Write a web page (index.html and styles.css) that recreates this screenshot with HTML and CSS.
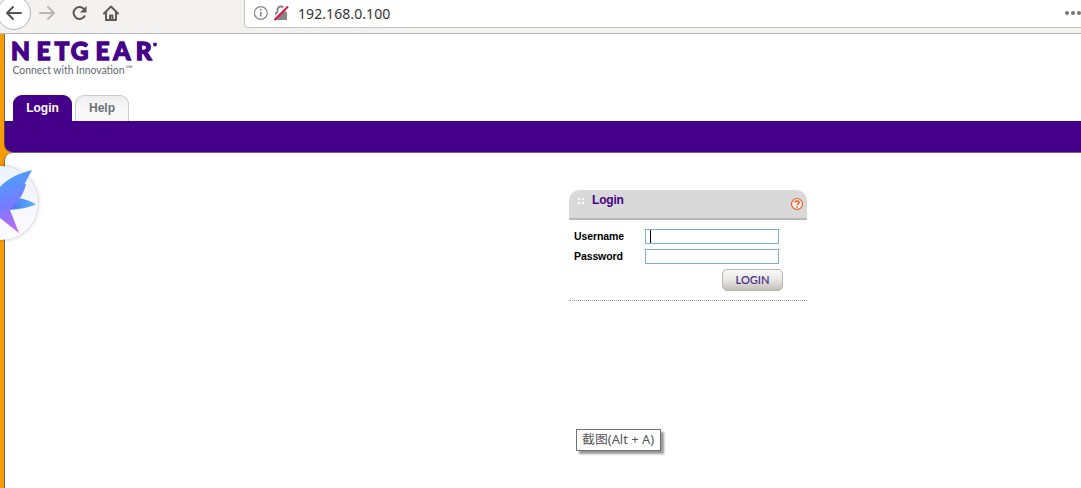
FILE: index.html
```html
<!DOCTYPE html>
<html lang="en">
<head>
<meta charset="utf-8">
<title>NETGEAR Login</title>
<link rel="stylesheet" href="styles.css">
</head>
<body>
<header class="toolbar">
  <svg class="nav-icons" width="130" height="33" viewBox="0 0 130 33">
    <circle cx="14" cy="13" r="16.5" fill="#fff" stroke="#b4b4b2"/>
    <g fill="none" stroke-width="2" stroke-linecap="round" stroke-linejoin="round">
      <path d="M21 13H7.500M13 7l-6 6 6 6" stroke="#555"/>
      <path d="M40 13h13.500M48 7l6 6-6 6" stroke="#b9b9b7"/>
      <path d="M84.500 9.500A6 6 0 1 0 85 15.500" stroke="#5b5b5a" stroke-linecap="butt"/>
      <path d="M104 13.500l7-7 7 7M106 13v7h10v-7" stroke="#5b5b5a"/>
      <path d="M110 20v-4.500h2.500V20" stroke="#5b5b5a"/>
    </g>
    <path d="M86.500 6v6.500H80z" fill="#5b5b5a"/>
  </svg>
  <div class="address">
    <svg width="44" height="26" viewBox="0 0 44 26">
      <circle cx="15.800" cy="13" r="6.400" fill="none" stroke="#858585" stroke-width="1.200"/>
      <path d="M15.800 12v4.500M15.800 9v1.600" stroke="#858585" stroke-width="1.600"/>
      <path d="M32.500 13v-3a3.500 3.500 0 0 1 7 0v3" fill="none" stroke="#858585" stroke-width="2"/>
      <rect x="30" y="12" width="12" height="8" rx="1" fill="#858585"/>
      <path d="M28.500 18.500L41.500 5.500" stroke="#fff" stroke-width="2"/>
      <path d="M29.500 20L43 6.500" stroke="#ec1146" stroke-width="2"/>
    </svg>
    <span class="url">192.168.0.100</span>
    <span class="more"><i></i><i></i><i></i></span>
  </div>
</header>
<main class="page">
  <div class="brand">
    <svg width="160" height="50" viewBox="0 0 160 50">
      <text class="wordmark" y="26" x="5 30.500 48.500 64.700 89.500 107.300 129.700">NETGEAR</text>
      <circle cx="149" cy="10.500" r="1.900" fill="#45008a"/>
      <text class="tagline" x="6.500" y="40" textLength="112" lengthAdjust="spacingAndGlyphs">Connect with Innovation</text>
      <text class="trademark" x="119.500" y="38" textLength="7" lengthAdjust="spacingAndGlyphs">™</text>
    </svg>
  </div>
  <nav class="tabs">
    <a class="tab active">Login</a>
    <a class="tab">Help</a>
  </nav>
  <div class="band"></div>
  <section class="content">
    <form class="panel">
      <div class="panel-head">
        <span class="grip"><i></i><i></i><i></i><i></i></span>
        <b>Login</b>
        <svg class="help" width="14" height="14" viewBox="0 0 14 14">
          <circle cx="7" cy="7" r="5.500" fill="#fff4ed" stroke="#f15a24" stroke-width="1.200"/>
          <path d="M5 5.500C5 3.600 9 3.600 9 5.500 9 6.700 7.100 6.800 7.100 8.200M7.100 9.200v1.500" fill="none" stroke="#f15a24" stroke-width="1.500"/>
        </svg>
      </div>
      <div class="fields">
        <div class="row"><span>Username</span><div class="input"><i class="caret"></i></div></div>
        <div class="row"><span>Password</span><div class="input"></div></div>
        <div class="button"><svg width="59" height="20"><text x="12.500" y="14" textLength="34" lengthAdjust="spacingAndGlyphs">LOGIN</text></svg></div>
      </div>
    </form>
  </section>
</main>
<svg class="bird" width="44" height="84" viewBox="0 0 44 84">
  <defs>
    <linearGradient id="wing" gradientUnits="userSpaceOnUse" x1="4" y1="18" x2="24" y2="68"><stop offset="0" stop-color="#4d9dff"/><stop offset=".5" stop-color="#7a7aff"/><stop offset="1" stop-color="#ca65f2"/></linearGradient>
    <linearGradient id="beak" x1="0" x2="1"><stop offset="0" stop-color="#4a70ee"/><stop offset="1" stop-color="#58b6ff"/></linearGradient>
    <linearGradient id="disc" x1="0" y1="0" x2="0" y2="1"><stop offset="0" stop-color="#edf2ff"/><stop offset="1" stop-color="#fcfcff"/></linearGradient>
  </defs>
  <circle class="disc" cx="1" cy="42" r="37" fill="url(#disc)"/>
  <path d="M17 37Q28 38 36 43.500 24 48 9 49z" fill="url(#beak)"/>
  <path d="M0 26C8 17 20 12 32 9L24.500 23l1.500 0C24 31 21 36 17 41L10 49 19 72 0 57z" fill="url(#wing)"/>
</svg>
<div class="tooltip"><svg width="82" height="19"><text x="5" y="14" textLength="72" lengthAdjust="spacingAndGlyphs">截图(Alt + A)</text></svg></div>
</body>
</html>
```
FILE: styles.css
```css
* { box-sizing: border-box; }
body {
  margin: 0;
  width: 1081px;
  height: 488px;
  overflow: hidden;
  background: #fff;
  font-family: "Liberation Sans", sans-serif;
}
.toolbar {
  display: flex;
  height: 34px;
  background: #f3f2f1;
  border-bottom: 1px solid #bdbcba;
}
.nav-icons { flex: none; margin-right: 114px; }
.address {
  display: flex;
  flex: 1;
  height: 28px;
  background: #fff;
  border: solid #c6c5c3;
  border-width: 0 0 1px 1px;
  border-bottom-left-radius: 4px;
}
.url {
  margin-left: 9px;
  font: 14px/27px "Noto Sans", sans-serif;
  letter-spacing: .08px;
  color: #333;
}
.more { display: flex; gap: 2px; margin: 11px 0 0 auto; }
.more i { width: 4px; height: 4px; border-radius: 50%; background: #777; }
.page {
  height: 454px;
  background: #f79c00;
  padding-left: 4px;
}
.brand {
  height: 51px;
  background: #fff;
  border-left: 1px solid #746a5c;
}
.brand svg { display: block; margin-left: 1px; }
.wordmark { font: 900 24.5px Lato, sans-serif; fill: #45008a; stroke: #45008a; stroke-width: 1.3px; }
.tagline { font: 11.5px Lato, sans-serif; fill: #5d6871; }
.trademark { font: 9px Lato, sans-serif; fill: #5d6871; }
.tabs {
  display: flex;
  gap: 3px;
  height: 36px;
  padding: 10px 0 0 8px;
  background: #fff;
  border-left: 1px solid #746a5c;
}
.tab {
  width: 54px;
  height: 26px;
  border: 1px solid #ccc;
  border-bottom: 0;
  border-radius: 9px 9px 0 0;
  background: linear-gradient(#ededed, #f8f8f8 50%);
  text-align: center;
  font: bold 12px/24px "Liberation Sans", sans-serif;
  color: #697176;
}
.tab.active { width: 59px; border-color: #45008a; background: #45008a; color: #fff; }
.band {
  height: 32px;
  background: #45008a;
  border-left: 1px solid #5c3d55;
  border-bottom: 1px solid #716479;
  border-bottom-left-radius: 9px;
}
.content {
  height: 335px;
  padding: 37px 0 0 564px;
  background: #fff;
  border-left: 1px solid #746a5c;
  border-top-left-radius: 8px;
}
.panel { width: 238px; }
.panel-head {
  display: flex;
  height: 30px;
  padding-left: 9px;
  background: #d9d9d9;
  border-bottom: 2px solid #b7b7b7;
  border-radius: 11px 11px 0 0;
}
.grip { display: grid; grid-template-columns: 2px 2px; grid-auto-rows: 2px; gap: 2px; margin-top: 8px; width: 14px; }
.grip i { background: #fff; }
.panel-head b { font-size: 12px; line-height: 21px; letter-spacing: -.2px; color: #45008a; }
.help { margin: 7px 3px 0 auto; }
.fields {
  height: 81px;
  padding: 9px 0 0 5px;
  border-bottom: 1px dotted #999;
}
.row { display: flex; height: 20px; }
.row span { width: 71px; font-weight: bold; font-size: 10.5px; line-height: 15px; letter-spacing: -.1px; }
.input { width: 134px; height: 15px; border: 1px solid #7cafdd; }
.caret { display: block; width: 1px; height: 13px; margin-left: 4px; background: #000; }
.button {
  width: 61px;
  height: 22px;
  margin-left: 148px;
  border: 1px solid #b9b6aa;
  border-radius: 5px;
  background: linear-gradient(#fafafa, #e7e6e3 50%, #c3c0b8);
}
.button svg { display: block; }
.button text { font: 600 11px Lato, sans-serif; fill: #4d318b; }
.bird { position: absolute; left: 0; top: 161px; }
.disc { filter: drop-shadow(0 0 2px rgba(0, 0, 0, .25)); }
.tooltip {
  position: absolute;
  left: 576px;
  top: 429px;
  width: 85px;
  height: 22px;
  border: 1px solid #707070;
  background: #fff;
  box-shadow: 3px 3px 2px #999;
}
.tooltip text { font: 12px "Noto Sans", "Noto Sans CJK SC", sans-serif; fill: #555; }
```
